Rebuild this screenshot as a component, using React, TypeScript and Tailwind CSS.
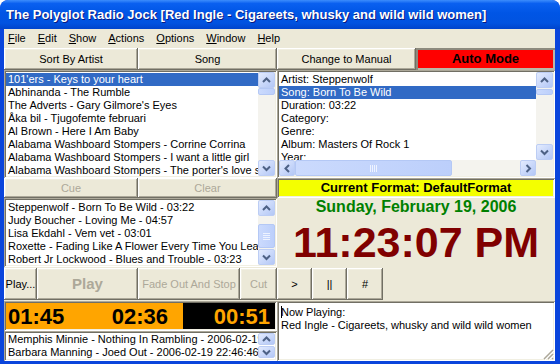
import clsx from "clsx";
import type { ReactNode } from "react";

const SANS = "font-['Liberation_Sans',Arial,sans-serif]";
const RAISED =
  "shadow-[inset_-1px_-1px_#716f64,inset_1px_1px_#ffffff,inset_-2px_-2px_#aca899,inset_2px_2px_#f1efe2]";
const SUNKEN =
  "shadow-[inset_1px_1px_#aca899,inset_-1px_-1px_#ffffff,inset_2px_2px_#716f64,inset_-2px_-2px_#f1efe2]";

const SONGS = [
  "101'ers - Keys to your heart",
  "Abhinanda - The Rumble",
  "The Adverts - Gary Gilmore's Eyes",
  "Åka bil - Tjugofemte februari",
  "Al Brown - Here I Am Baby",
  "Alabama Washboard Stompers - Corrine Corrina",
  "Alabama Washboard Stompers - I want a little girl",
  "Alabama Washboard Stompers - The porter's love song",
];

const QUEUE = [
  "Steppenwolf - Born To Be Wild - 03:22",
  "Judy Boucher - Loving Me - 04:57",
  "Lisa Ekdahl - Vem vet - 03:01",
  "Roxette - Fading Like A Flower Every Time You Leave - 03:55",
  "Robert Jr Lockwood - Blues and Trouble - 03:23",
];

const INFO = [
  "Artist: Steppenwolf",
  "Song: Born To Be Wild",
  "Duration: 03:22",
  "Category:",
  "Genre:",
  "Album: Masters Of Rock 1",
  "Year:",
];

const HISTORY = [
  "Memphis Minnie - Nothing In Rambling - 2006-02-19 22:43:24",
  "Barbara Manning - Joed Out - 2006-02-19 22:46:46",
];

const MENU = ["File", "Edit", "Show", "Actions", "Options", "Window", "Help"];

const Btn = ({
  children,
  className,
  disabled,
}: {
  children: ReactNode;
  className?: string;
  disabled?: boolean;
}) => (
  <div
    className={clsx(
      "flex items-center justify-center bg-[#ece9d8] text-[11px] whitespace-nowrap",
      RAISED,
      disabled ? "text-[#aca899]" : "text-black",
      className
    )}
  >
    {children}
  </div>
);

const ARROWS: Record<string, string> = {
  up: "M1 5L4.5 1.5L8 5",
  down: "M1 1.5L4.5 5L8 1.5",
  left: "M5 1L1.5 4.5L5 8",
  right: "M1.5 1L5 4.5L1.5 8",
};

const Arrow = ({ dir, className }: { dir: string; className?: string }) => {
  const vert = dir === "up" || dir === "down";
  return (
    <div
      className={clsx(
        "flex shrink-0 items-center justify-center rounded-[2px] border border-[#bccdf4] bg-linear-to-br from-[#e3ebfe] to-[#b3c7f6]",
        className
      )}
    >
      <svg
        width={vert ? 9 : 7}
        height={vert ? 7 : 9}
        viewBox={vert ? "0 0 9 7" : "0 0 7 9"}
      >
        <path d={ARROWS[dir]} stroke="#4d6185" strokeWidth="2" fill="none" />
      </svg>
    </div>
  );
};

// grip lines: horizontal for vertical bars, vertical for the horizontal one
const Thumb = ({
  grip,
  horizontal,
  className,
}: {
  grip?: boolean;
  horizontal?: boolean;
  className?: string;
}) => (
  <div
    className={clsx(
      "flex items-center justify-center rounded-[2px] border border-[#b4c8f5] bg-linear-to-r from-[#cbdafd] to-[#bccffb]",
      className
    )}
  >
    {grip && (
      <div
        className={clsx(
          "flex gap-[1px]",
          horizontal ? "h-[7px] flex-row" : "w-[7px] flex-col"
        )}
      >
        {[0, 1, 2, 3].map((i) => (
          <div
            key={i}
            className={clsx("bg-[#eef3ff]", horizontal ? "w-px" : "h-px")}
          />
        ))}
      </div>
    )}
  </div>
);

const VScroll = ({
  thumbTop,
  thumbH,
  grip,
}: {
  thumbTop: number;
  thumbH: number;
  grip?: boolean;
}) => (
  <div className="flex w-[17px] shrink-0 flex-col bg-[#f4f3ee]">
    <Arrow dir="up" className="h-[16px]" />
    <div className="flex-1">
      <div style={{ marginTop: thumbTop, height: thumbH }}>
        <Thumb grip={grip} className="h-full w-full" />
      </div>
    </div>
    <Arrow dir="down" className="h-[16px]" />
  </div>
);

const Rows = ({
  items,
  selected,
  className,
}: {
  items: string[];
  selected?: number;
  className?: string;
}) => (
  <div className={clsx("min-w-0 flex-1 overflow-hidden", className)}>
    {items.map((t, i) => (
      <div
        key={t}
        className={clsx(
          "h-[13px] overflow-hidden whitespace-nowrap pl-[2px] text-[11px] leading-[13px]",
          i === selected ? "bg-[#316ac5] text-white" : "text-black"
        )}
      >
        {t}
      </div>
    ))}
  </div>
);

const TitleBar = () => (
  <div className="flex h-[29px] shrink-0 items-center rounded-t-[8px] bg-[linear-gradient(180deg,#3d8dfc_0%,#0a60f0_12%,#0055e5_45%,#0153e0_80%,#0044cc_100%)] pl-[6px]">
    <div className="whitespace-nowrap text-[13px] font-bold text-white [text-shadow:1px_1px_#0a1a80]">
      The Polyglot Radio Jock [Red Ingle - Cigareets, whusky and wild wild women]
    </div>
  </div>
);

const MenuBar = () => (
  <div className="flex h-[19px] shrink-0 items-center gap-[12px] pl-[4px] text-[11px]">
    {MENU.map((m) => (
      <span key={m}>
        <span className="underline">{m[0]}</span>
        {m.slice(1)}
      </span>
    ))}
  </div>
);

export default function App() {
  return (
    <div
      className={clsx(
        "flex h-[364px] w-[560px] flex-col overflow-hidden rounded-t-[8px] bg-[#0a45dc] text-black",
        SANS
      )}
    >
      <TitleBar />
      <div className="mb-[4px] ml-[4px] mr-[5px] flex flex-1 flex-col bg-[#ece9d8]">
        <MenuBar />

        {/* top buttons */}
        <div className="flex h-[22px] shrink-0">
          <Btn className="w-[134px]">Sort By Artist</Btn>
          <Btn className="w-[139px]">Song</Btn>
          <Btn className="w-[139px]">Change to Manual</Btn>
          <div className="flex w-[139px] items-center justify-center bg-[#ff0000] text-[13px] font-bold shadow-[inset_2px_2px_#8d8a7d,inset_-2px_-2px_#b9b6a8]">
            Auto Mode
          </div>
        </div>

        {/* song list + info */}
        <div className="flex h-[108px] shrink-0">
          <div className={clsx("flex w-[273px] bg-white p-[2px]", SUNKEN)}>
            <Rows items={SONGS} selected={0} className="pt-[1px]" />
            <VScroll thumbTop={0} thumbH={7} />
          </div>
          <div className={clsx("flex w-[278px] flex-col bg-white p-[2px]", SUNKEN)}>
            <div className="flex min-h-0 flex-1">
              <Rows items={INFO} selected={1} className="pt-[1px]" />
              <VScroll thumbTop={1} thumbH={6} />
            </div>
            <div className="flex h-[16px] shrink-0">
              <div className="flex flex-1 bg-[#f4f3ee]">
                <Arrow dir="left" className="w-[16px]" />
                <Thumb grip horizontal className="w-[157px]" />
                <div className="flex-1" />
                <Arrow dir="right" className="w-[16px]" />
              </div>
              <div className="w-[17px] bg-[#f2f1ea]" />
            </div>
          </div>
        </div>

        {/* cue / format */}
        <div className="flex h-[20px] shrink-0">
          <Btn disabled className="w-[134px]">
            Cue
          </Btn>
          <Btn disabled className="w-[139px]">
            Clear
          </Btn>
          <div
            className={clsx(
              "flex w-[278px] items-center justify-center bg-[#f4ff00] text-[13px] font-bold",
              SUNKEN
            )}
          >
            Current Format: DefaultFormat
          </div>
        </div>

        {/* queue + clock */}
        <div className="flex h-[69px] shrink-0">
          <div className={clsx("flex w-[273px] bg-white p-[2px]", SUNKEN)}>
            <Rows items={QUEUE} className="pt-[1px]" />
            <VScroll thumbTop={8} thumbH={24} grip />
          </div>
          <div className="flex w-[278px] flex-col items-center">
            <div className="text-[16px] font-bold leading-[18px] text-[#008000]">
              Sunday, February 19, 2006
            </div>
            <div className="mt-[5px] text-[43px] font-bold leading-[43px] text-[#800000]">
              11:23:07 PM
            </div>
          </div>
        </div>

        {/* transport buttons */}
        <div className="flex h-[34px] shrink-0 items-center">
          <Btn className="h-[32px] w-[33px]">Play...</Btn>
          <Btn disabled className="h-[32px] w-[101px] text-[15px] font-bold">
            Play
          </Btn>
          <Btn disabled className="h-[32px] w-[102px]">
            Fade Out And Stop
          </Btn>
          <Btn disabled className="h-[32px] w-[37px]">
            Cut
          </Btn>
          <Btn className="h-[32px] w-[35px]">&gt;</Btn>
          <Btn className="h-[32px] w-[35px]">||</Btn>
          <Btn className="h-[32px] w-[36px]">#</Btn>
        </div>

        {/* times, history, now playing */}
        <div className="flex min-h-0 flex-1">
          <div className="flex w-[273px] flex-col">
            <div className={clsx("flex h-[30px] shrink-0 bg-black p-[2px]", SUNKEN)}>
              <div className="flex flex-1 items-center justify-between bg-[#ffa500] pl-[2px] pr-[15px] text-[22px] font-bold">
                <span>01:45</span>
                <span>02:36</span>
              </div>
              <div className="flex w-[92px] items-center justify-end pr-[5px] text-[22px] font-bold text-[#ffa500]">
                00:51
              </div>
            </div>
            <div className={clsx("flex flex-1 overflow-hidden bg-white p-[2px]", SUNKEN)}>
              <Rows items={HISTORY} />
              <div className="flex w-[17px] shrink-0 flex-col gap-[1px]">
                <Arrow dir="up" className="h-[12px]" />
                <Arrow dir="down" className="h-[12px]" />
              </div>
            </div>
          </div>
          <div
            className={clsx(
              "relative flex-1 bg-white px-[4px] pt-[3px] text-[11px] leading-[13px]",
              SUNKEN
            )}
          >
            <div>
              <span className="mr-[-1px] inline-block h-[12px] w-px translate-y-[2px] bg-black" />
              Now Playing:
            </div>
            <div className="whitespace-nowrap">
              Red Ingle - Cigareets, whusky and wild wild women
            </div>
            <svg
              width="12"
              height="12"
              viewBox="0 0 12 12"
              className="absolute bottom-[1px] right-[1px]"
            >
              <path d="M11 2L2 11M11 6L6 11M11 10L10 11" stroke="#aca899" strokeWidth="1.5" />
              <path d="M12 3L3 12M12 7L7 12" stroke="#ffffff" strokeWidth="1" />
            </svg>
          </div>
        </div>
      </div>
    </div>
  );
}
